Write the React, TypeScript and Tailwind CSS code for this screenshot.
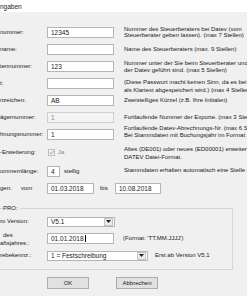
import React from "react";

function Arrow() {
  return (
    <div className="mr-[1px] flex h-[8px] w-[9px] items-center justify-center border border-[#c4c4c4] bg-[#ececec]">
      <svg width="5" height="3" viewBox="0 0 5 3">
        <path d="M0 0 L5 0 L2.5 3 Z" fill="#222" />
      </svg>
    </div>
  );
}

export default function App() {
  return (
    <div className="relative h-[296px] w-[247px] overflow-hidden whitespace-nowrap bg-[#f0f0f0] font-['Liberation_Sans',Arial,sans-serif] text-[6px] leading-[7px] text-[#1a1a1a]">
      <div className="flex h-[12px] items-center bg-white text-[6.5px]">ngaben</div>

      <div className="mt-[11px] flex flex-col">
        {/* Row 1 */}
        <div className="flex h-[18px] items-center">
          <div className="w-[47px] shrink-0">nummer:</div>
          <div className="flex h-[11px] w-[67px] shrink-0 items-center border border-[#b5b5b5] bg-white pl-[3px] text-[6.5px]">12345</div>
          <div className="ml-[10px] leading-[6px]">
            <div>Nummer des Steuerberaters bei Datev (vom</div>
            <div>Steuerberater geben lassen). (max 7 Stellen)</div>
          </div>
        </div>
        {/* Row 2 */}
        <div className="flex h-[16px] items-center">
          <div className="w-[47px] shrink-0">name:</div>
          <div className="flex h-[11px] w-[67px] shrink-0 items-center border border-[#b5b5b5] bg-white pl-[3px] text-[6.5px]"></div>
          <div className="ml-[10px]">Name des Steuerberaters (max. 9 Stellen)</div>
        </div>
        {/* Row 3 */}
        <div className="flex h-[18px] items-center">
          <div className="w-[47px] shrink-0">tennummer:</div>
          <div className="flex h-[11px] w-[67px] shrink-0 items-center border border-[#b5b5b5] bg-white pl-[3px] text-[6.5px]">123</div>
          <div className="ml-[10px] mt-[1px] leading-[7px]">
            <div>Nummer unter der Sie beim Steuerberater und</div>
            <div>der Datev geführt sind. (max 5 Stellen)</div>
          </div>
        </div>
        {/* Row 4 */}
        <div className="flex h-[17px] items-center">
          <div className="w-[47px] shrink-0">t:</div>
          <div className="flex h-[11px] w-[67px] shrink-0 items-center border border-[#b5b5b5] bg-white pl-[3px] text-[6.5px]"></div>
          <div className="ml-[10px] mt-[5px] leading-[8px]">
            <div>(Diese Passwort macht keinen Sinn, da es bei Datev</div>
            <div>als Klartext abgespeichert wird.) (max 4 Stellen)</div>
          </div>
        </div>
        {/* Row 5 */}
        <div className="flex h-[17px] items-center">
          <div className="w-[47px] shrink-0">nzeichen:</div>
          <div className="flex h-[11px] w-[67px] shrink-0 items-center border border-[#b5b5b5] bg-white pl-[3px] text-[6.5px]">AB</div>
          <div className="ml-[10px]">Zweistelliges Kürzel (z.B. Ihre Initialen)</div>
        </div>
        {/* Row 6 */}
        <div className="flex h-[16px] items-center">
          <div className="w-[47px] shrink-0">ägernummer:</div>
          <div className="flex h-[11px] w-[67px] shrink-0 items-center border border-[#cfcfcf] bg-[#f4f4f4] pl-[3px] text-[6.5px] text-[#8a8a8a]">1</div>
          <div className="ml-[10px]">Fortlaufende Nummer der Exporte. (max 3 Stellen)</div>
        </div>
        {/* Row 7 */}
        <div className="flex h-[18px] items-center">
          <div className="w-[47px] shrink-0">hnungsnummer:</div>
          <div className="flex h-[11px] w-[67px] shrink-0 items-center border border-[#b5b5b5] bg-white pl-[3px] text-[6.5px]">1</div>
          <div className="ml-[10px] mb-[5px] leading-[7px]">
            <div>Fortlaufende Datev-Abrechnungs-Nr. (max 6 Stellen)</div>
            <div>Bei Stammdaten mit Buchungsjahr im Format JJJJ</div>
          </div>
        </div>
        {/* Row 8 */}
        <div className="flex h-[18px] items-center">
          <div className="w-[47px] shrink-0">-Erweiterung:</div>
          <div className="flex w-[77px] shrink-0 items-center">
            <div className="ml-[1px] flex h-[7px] w-[7px] items-center justify-center border border-[#bdbdbd] bg-[#f4f4f4]">
              <svg width="5" height="5" viewBox="0 0 5 5">
                <path d="M0.6 2.6 L2 4 L4.5 0.8" stroke="#9a9a9a" strokeWidth="1" fill="none" />
              </svg>
            </div>
            <span className="ml-[3px] text-[#8a8a8a]">Ja</span>
          </div>
          <div className="mt-[2px] leading-[8px]">
            <div>Altes (DE001) oder neues (ED00001) erweitertes</div>
            <div>DATEV Datei-Format.</div>
          </div>
        </div>
        {/* Row 9 */}
        <div className="flex h-[20px] items-center">
          <div className="w-[47px] shrink-0">ummernlänge:</div>
          <div className="flex w-[77px] shrink-0 items-center">
            <div className="flex h-[11px] w-[13px] shrink-0 items-center border border-[#b5b5b5] bg-white pl-[3px] text-[6.5px]">4</div>
            <span className="ml-[4px]">stellig</span>
          </div>
          <div className="mb-[2px]">Stammdaten erhalten automatisch eine Stelle mehr</div>
        </div>
        {/* Row 10 */}
        <div className="flex h-[14px] items-center">
          <div className="flex w-[47px] shrink-0">
            <span className="w-[21px]">gen:</span>
            <span>vom</span>
          </div>
          <div className="flex h-[11px] w-[47px] shrink-0 items-center border border-[#b5b5b5] bg-white pl-[3px] text-[6.5px]">01.03.2018</div>
          <span className="ml-[6px] w-[15px]">bis</span>
          <div className="flex h-[11px] w-[46px] shrink-0 items-center border border-[#b5b5b5] bg-white pl-[3px] text-[6.5px]">10.08.2018</div>
        </div>
      </div>

      {/* Group box */}
      <div className="relative ml-[-10px] mt-[13px] w-[243px] border border-[#d6d6d6] pb-[5px] pl-[9px] pt-[4px]">
        <span className="absolute left-[12px] top-[-4px] bg-[#f0f0f0] pr-[2px]">PRO:</span>
        <div className="flex h-[17px] items-center">
          <div className="w-[47px] shrink-0">ro Version:</div>
          <div className="flex h-[10px] w-[68px] shrink-0 items-center justify-between border border-[#b5b5b5] bg-white pl-[3px] text-[6.5px]">
            <span>V5.1</span>
            <Arrow />
          </div>
        </div>
        <div className="flex h-[17px] items-center">
          <div className="w-[47px] shrink-0 leading-[8px]">
            <div className="ml-[3px]">des</div>
            <div>aftsjahres.:</div>
          </div>
          <div className="flex h-[11px] w-[67px] shrink-0 items-center border border-[#b5b5b5] bg-white pl-[3px] text-[6.5px]">
            <span>01.01.2018</span>
            <span className="ml-[1px] inline-block h-[7px] w-[1px] bg-black"></span>
          </div>
          <div className="ml-[9px]">(Format: 'TT.MM.JJJJ')</div>
        </div>
        <div className="flex h-[17px] items-center">
          <div className="w-[47px] shrink-0">rebekennz.:</div>
          <div className="flex h-[10px] w-[101px] shrink-0 items-center justify-between border border-[#b5b5b5] bg-white pl-[3px] text-[6.5px]">
            <span>1 = Festschreibung</span>
            <Arrow />
          </div>
          <div className="ml-[7px]">Erst ab Version V5.1</div>
        </div>
      </div>

      {/* Buttons */}
      <div className="mt-[7px] flex">
        <div className="ml-[47px] flex h-[12px] w-[42px] items-center justify-center border border-[#adadad] bg-[#e1e1e1]">OK</div>
        <div className="ml-[27px] flex h-[12px] w-[42px] items-center justify-center border border-[#adadad] bg-[#e1e1e1]">Abbrechen</div>
      </div>
    </div>
  );
}
